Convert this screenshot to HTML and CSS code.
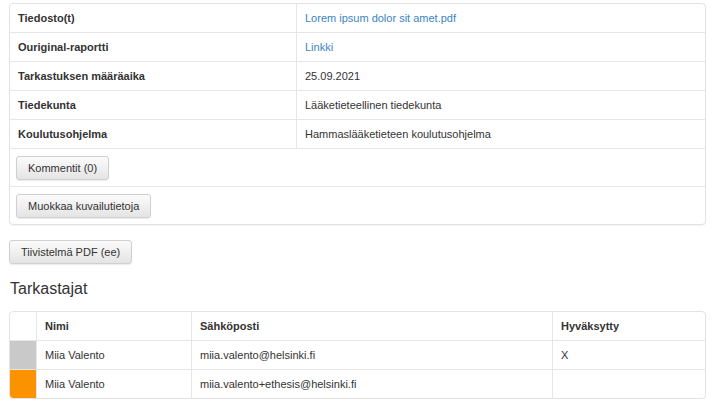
FILE: index.html
```html
<!DOCTYPE html>
<html lang="fi">
<head>
    <meta charset="UTF-8">
    <title>Opinnäyte</title>
    <link rel="stylesheet" href="styles.css">
</head>
<body>
    <!-- perustiedot -->
    <div class="panel">
        <table class="info">
            <tr>
                <th>Tiedosto(t)</th>
                <td><a href="#">Lorem ipsum dolor sit amet.pdf</a></td>
            </tr>
            <tr>
                <th>Ouriginal-raportti</th>
                <td><a href="#">Linkki</a></td>
            </tr>
            <tr>
                <th>Tarkastuksen määräaika</th>
                <td>25.09.2021</td>
            </tr>
            <tr>
                <th>Tiedekunta</th>
                <td>Lääketieteellinen tiedekunta</td>
            </tr>
            <tr>
                <th>Koulutusohjelma</th>
                <td>Hammaslääketieteen koulutusohjelma</td>
            </tr>
            <tr class="btn-row">
                <td colspan="2"><button class="btn">Kommentit (0)</button></td>
            </tr>
            <tr class="btn-row">
                <td colspan="2"><button class="btn">Muokkaa kuvailutietoja</button></td>
            </tr>
        </table>
    </div>

    <button class="btn pdf-btn">Tiivistelmä PDF (ee)</button>

    <h2>Tarkastajat</h2>

    <div class="panel">
        <table class="reviewers">
            <tr>
                <th class="state"></th>
                <th class="c-name">Nimi</th>
                <th class="c-mail">Sähköposti</th>
                <th>Hyväksytty</th>
            </tr>
            <tr>
                <td class="state grey"></td>
                <td>Miia Valento</td>
                <td>miia.valento@helsinki.fi</td>
                <td>X</td>
            </tr>
            <tr class="last">
                <td class="state orange"></td>
                <td>Miia Valento</td>
                <td>miia.valento+ethesis@helsinki.fi</td>
                <td></td>
            </tr>
        </table>
    </div>
</body>
</html>
```

FILE: styles.css
```css
/* sivun pohja */
body {
    margin: 0;
    padding: 3px 14px 0 9px;
    font-family: "Liberation Sans", Arial, sans-serif;
    font-size: 11px;
    color: #333;
    background: #fff;
}

a {
    color: #3a85c2;
    text-decoration: none;
}

/* laatikko taulukoiden ympärillä */
.panel {
    width: 695px;
    border: 1px solid #e3e3e3;
    border-radius: 4px;
    box-shadow: 0 1px 1px rgba(0, 0, 0, 0.05);
    overflow: hidden;
}

table {
    width: 100%;
    border-collapse: collapse;
}

th, td {
    text-align: left;
    padding: 0 8px;
    height: 28px;
    vertical-align: middle;
    border-bottom: 1px solid #e6e6e6;
}

th {
    font-weight: bold;
}

tr:last-child th,
tr:last-child td {
    border-bottom: none;
}

.info th {
    width: 270px;
    border-right: 1px solid #e6e6e6;
}

.info .btn-row td {
    height: 37px;
    padding: 0 6px;
}

/* napit */
.btn {
    font-family: inherit;
    font-size: 11px;
    color: #333;
    line-height: 16px;
    padding: 3px 11px;
    background: linear-gradient(#fbfbfb, #e4e4e4);
    border: 1px solid #d0d0d0;
    border-radius: 3px;
    box-shadow: 0 1px 1px rgba(0, 0, 0, 0.08);
    cursor: pointer;
}

.pdf-btn {
    margin-top: 15px;
    display: block;
}

h2 {
    font-size: 16px;
    font-weight: normal;
    margin: 16px 0 13px 1px;
    line-height: 18px;
}

/* tarkastajat */
.reviewers td,
.reviewers th {
    border-right: 1px solid #e6e6e6;
}

.reviewers td:last-child,
.reviewers th:last-child {
    border-right: none;
}

.reviewers .state {
    width: 26px;
    padding: 0;
}

.reviewers .c-name {
    width: 138px;
}

.reviewers .c-mail {
    width: 344px;
}

.state.grey {
    background: #c9c9c9;
}

.state.orange {
    background: #fb9300;
    border-bottom-left-radius: 3px;
}
```
